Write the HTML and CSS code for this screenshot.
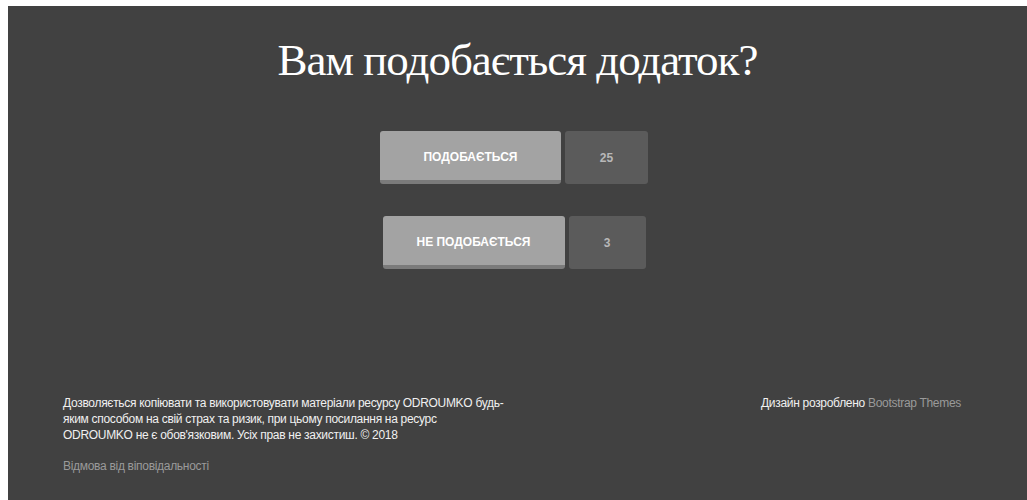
FILE: index.html
```html
<!DOCTYPE html>
<html lang="uk">
<head>
<meta charset="utf-8">
<title>Вам подобається додаток?</title>
<link rel="stylesheet" href="styles.css">
</head>
<body>
<div class="page">
  <header class="hero">
    <h1 class="hero-title">Вам подобається додаток?</h1>
  </header>

  <main class="votes">
    <div class="vote-row">
      <button class="vote-btn vote-like" type="button">Подобається</button>
      <span class="vote-count">25</span>
    </div>
    <div class="vote-row vote-row-second">
      <button class="vote-btn vote-dislike" type="button">Не подобається</button>
      <span class="vote-count vote-count-small">3</span>
    </div>
  </main>

  <footer class="site-footer">
    <div class="footer-left">
      <p class="license">Дозволяється копіювати та використовувати матеріали ресурсу ODROUMKO будь-яким способом на свій страх та ризик, при цьому посилання на ресурс ODROUMKO не є обов'язковим. Усіх прав не захистиш. © 2018</p>
      <a class="footer-link" href="#">Відмова від віповідальності</a>
    </div>
    <div class="footer-right">
      <p class="credits">Дизайн розроблено <a class="footer-link" href="#">Bootstrap Themes</a></p>
    </div>
  </footer>
</div>
</body>
</html>
```

FILE: styles.css
```css
html, body {
  height: 100%;
}

body {
  margin: 6px 0 0 8px;
  background: #ffffff;
  font-family: "Liberation Sans", Arial, sans-serif;
  overflow: hidden;
}

.page {
  background: #414141;
  min-height: 494px;
  display: flex;
  flex-direction: column;
}

/* Heading */
.hero {
  padding-top: 30px;
  text-align: center;
}

.hero-title {
  margin: 0;
  font-family: "Liberation Serif", "Times New Roman", serif;
  font-weight: normal;
  font-size: 45px;
  line-height: 1.1;
  letter-spacing: -1px;
  color: #ffffff;
}

/* Vote buttons */
.votes {
  display: flex;
  flex-direction: column;
  align-items: center;
  gap: 32px;
  margin-top: 45px;
  padding-right: 7px;
}

.vote-row {
  display: flex;
  gap: 4px;
  height: 53px;
}

.vote-btn {
  width: 181px;
  height: 53px;
  padding: 4px 0 0;
  border: 0;
  border-bottom: 4px solid #7b7b7b;
  border-radius: 3px;
  background: #a3a3a3;
  color: #ffffff;
  font-family: "Liberation Sans", Arial, sans-serif;
  font-size: 12px;
  font-weight: bold;
  text-transform: uppercase;
  cursor: pointer;
}

.vote-dislike {
  width: 182px;
}

.vote-count {
  display: flex;
  align-items: center;
  justify-content: center;
  width: 83px;
  padding-top: 1px;
  border-radius: 3px;
  background: #5b5b5b;
  color: #b8b8b8;
  font-size: 12px;
  font-weight: bold;
}

.vote-count-small {
  width: 77px;
}

/* Footer */
.site-footer {
  display: flex;
  justify-content: space-between;
  margin-top: 126px;
  padding: 0 66px 0 55px;
  font-size: 12px;
  line-height: 16px;
  letter-spacing: -0.3px;
  color: #f0f0f0;
}

.footer-left {
  width: 444px;
}

.license {
  margin: 0;
}

.footer-link {
  display: inline-block;
  color: #9a9a9a;
  text-decoration: none;
}

.footer-left .footer-link {
  margin-top: 15px;
}

.credits {
  margin: 0;
}
```
